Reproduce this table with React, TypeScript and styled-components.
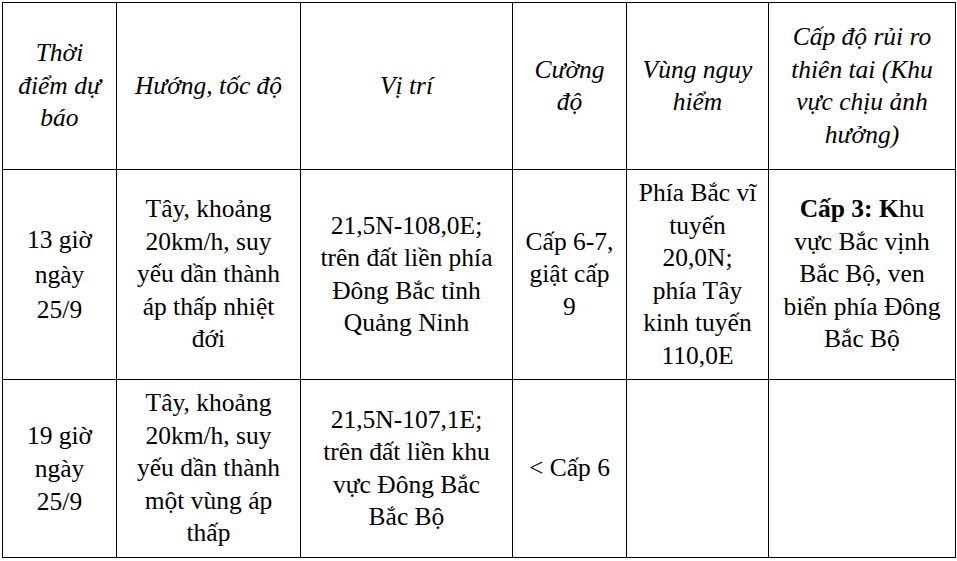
import React from 'react';
import styled, { createGlobalStyle } from 'styled-components';

const GlobalStyle = createGlobalStyle`
  html, body {
    margin: 0;
    padding: 0;
    background: #ffffff;
  }
  body {
    font-family: "Liberation Serif", "Times New Roman", serif;
    color: #000;
  }
`;

const Page = styled.div`
  padding: 2px 0 0 2px;
`;

const Grid = styled.div`
  display: grid;
  grid-template-columns: 114px 184px 212px 114px 142px 187px;
  grid-template-rows: 167px 210px 178px;
  width: max-content;
  border-left: 1px solid #000;
  border-top: 1px solid #000;
`;

const Cell = styled.div<{ $head?: boolean; $leading?: number }>`
  box-sizing: border-box;
  border-right: 1px solid #000;
  border-bottom: 1px solid #000;
  display: flex;
  align-items: center;
  justify-content: center;
  text-align: center;
  padding: 0 4px;
  font-size: 25.5px;
  line-height: ${(p) => p.$leading ?? 32.5}px;
  font-style: ${(p) => (p.$head ? 'italic' : 'normal')};
  white-space: nowrap;
`;

const Strong = styled.b`
  font-weight: 700;
`;

type CellData = { lines: React.ReactNode[]; leading?: number };

const header: CellData[] = [
  { lines: ['Thời', 'điểm dự', 'báo'] },
  { lines: ['Hướng, tốc độ'] },
  { lines: ['Vị trí'] },
  { lines: ['Cường', 'độ'] },
  { lines: ['Vùng nguy', 'hiểm'] },
  { lines: ['Cấp độ rủi ro', 'thiên tai (Khu', 'vực chịu ảnh', 'hưởng)'] },
];

const rows: CellData[][] = [
  [
    { lines: ['13 giờ', 'ngày', '25/9'], leading: 35 },
    { lines: ['Tây, khoảng', '20km/h, suy', 'yếu dần thành', 'áp thấp nhiệt', 'đới'] },
    { lines: ['21,5N-108,0E;', 'trên đất liền phía', 'Đông Bắc tỉnh', 'Quảng Ninh'] },
    { lines: ['Cấp 6-7,', 'giật cấp', '9'] },
    { lines: ['Phía Bắc vĩ', 'tuyến', '20,0N;', 'phía Tây', 'kinh tuyến', '110,0E'] },
    {
      lines: [
        <>
          <Strong>Cấp 3: K</Strong>hu
        </>,
        'vực Bắc vịnh',
        'Bắc Bộ, ven',
        'biển phía Đông',
        'Bắc Bộ',
      ],
    },
  ],
  [
    { lines: ['19 giờ', 'ngày', '25/9'], leading: 33 },
    { lines: ['Tây, khoảng', '20km/h, suy', 'yếu dần thành', 'một vùng áp', 'thấp'] },
    { lines: ['21,5N-107,1E;', 'trên đất liền khu', 'vực Đông Bắc', 'Bắc Bộ'] },
    { lines: ['< Cấp 6'] },
    { lines: [] },
    { lines: [] },
  ],
];

const Lines: React.FC<{ lines: React.ReactNode[] }> = ({ lines }) => (
  <span>
    {lines.map((l, i) => (
      <React.Fragment key={i}>
        {i > 0 && <br />}
        {l}
      </React.Fragment>
    ))}
  </span>
);

export default function App() {
  return (
    <>
      <GlobalStyle />
      <Page>
        <Grid>
          {header.map((c, i) => (
            <Cell key={`h${i}`} $head $leading={c.leading}>
              <Lines lines={c.lines} />
            </Cell>
          ))}
          {rows.map((row, r) =>
            row.map((c, i) => (
              <Cell key={`r${r}c${i}`} $leading={c.leading}>
                <Lines lines={c.lines} />
              </Cell>
            ))
          )}
        </Grid>
      </Page>
    </>
  );
}
